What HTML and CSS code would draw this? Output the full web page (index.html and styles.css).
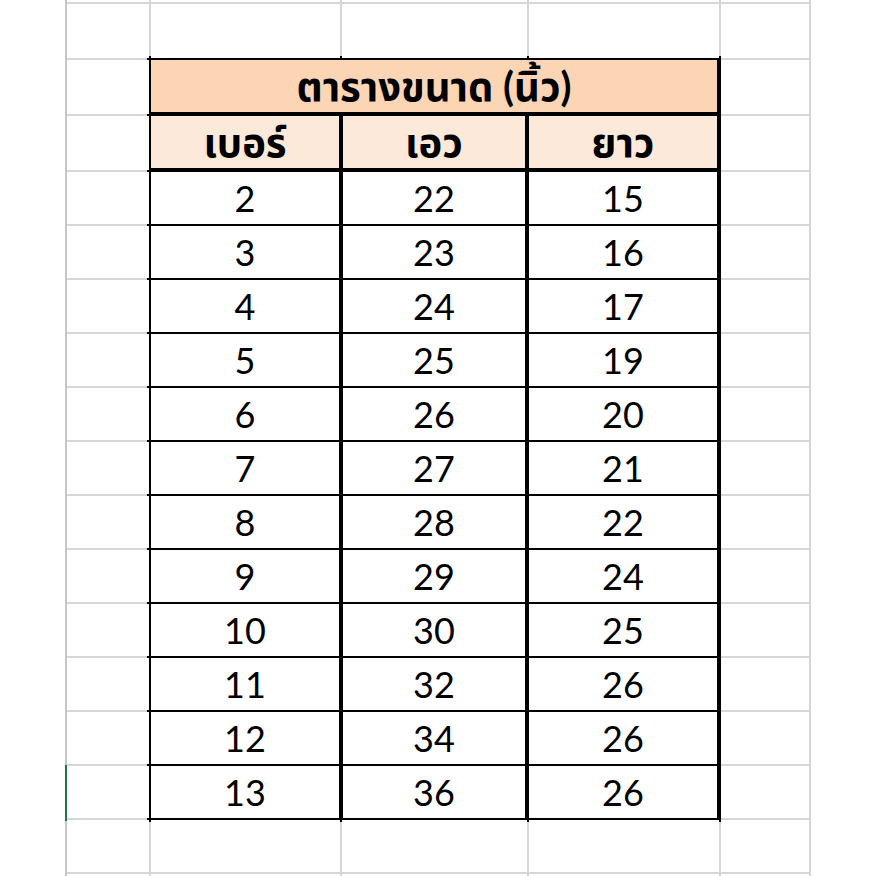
FILE: index.html
```html
<!DOCTYPE html>
<html lang="th">
<head>
<meta charset="utf-8">
<title>ตารางขนาด</title>
<link rel="stylesheet" href="styles.css">
</head>
<body>
<div class="page">
  <div class="gutter">
    <div class="gutter-line"><div class="sel-mark"></div></div>
  </div>
  <div class="sheet">
    <div class="size-table">
      <div class="cell title">ตารางขนาด (นิ้ว)</div>
      <div class="cell head">เบอร์</div>
      <div class="cell head">เอว</div>
      <div class="cell head">ยาว</div>
      <div class="cell">2</div><div class="cell">22</div><div class="cell">15</div>
      <div class="cell">3</div><div class="cell">23</div><div class="cell">16</div>
      <div class="cell">4</div><div class="cell">24</div><div class="cell">17</div>
      <div class="cell">5</div><div class="cell">25</div><div class="cell">19</div>
      <div class="cell">6</div><div class="cell">26</div><div class="cell">20</div>
      <div class="cell">7</div><div class="cell">27</div><div class="cell">21</div>
      <div class="cell">8</div><div class="cell">28</div><div class="cell">22</div>
      <div class="cell">9</div><div class="cell">29</div><div class="cell">24</div>
      <div class="cell">10</div><div class="cell">30</div><div class="cell">25</div>
      <div class="cell">11</div><div class="cell">32</div><div class="cell">26</div>
      <div class="cell">12</div><div class="cell">34</div><div class="cell">26</div>
      <div class="cell">13</div><div class="cell">36</div><div class="cell">26</div>
    </div>
    <div class="gc"></div><div class="gc"></div><div class="gc"></div><div class="gc"></div><div class="gc"></div>
    <div class="gc"></div><div class="gc"></div><div class="gc"></div><div class="gc"></div><div class="gc"></div>
    <div class="gc"></div><div class="gc"></div><div class="gc"></div><div class="gc"></div><div class="gc"></div>
    <div class="gc"></div><div class="gc"></div><div class="gc"></div><div class="gc"></div><div class="gc"></div>
    <div class="gc"></div><div class="gc"></div><div class="gc"></div><div class="gc"></div><div class="gc"></div>
    <div class="gc"></div><div class="gc"></div><div class="gc"></div><div class="gc"></div><div class="gc"></div>
    <div class="gc"></div><div class="gc"></div><div class="gc"></div><div class="gc"></div><div class="gc"></div>
    <div class="gc"></div><div class="gc"></div><div class="gc"></div><div class="gc"></div><div class="gc"></div>
    <div class="gc"></div><div class="gc"></div><div class="gc"></div><div class="gc"></div><div class="gc"></div>
    <div class="gc"></div><div class="gc"></div><div class="gc"></div>
  </div>
</div>
</body>
</html>
```

FILE: styles.css
```css
html, body {
  margin: 0;
  padding: 0;
  background: #ffffff;
}

.page {
  display: flex;
  width: 876px;
  height: 876px;
  overflow: hidden;
}

.gutter {
  width: 65px;
  display: flex;
  justify-content: flex-end;
  flex: none;
}

.gutter-line {
  width: 2px;
  height: 876px;
  margin-right: -2px;
  background: #c6c6c6;
  display: flex;
  flex-direction: column;
}

.sel-mark {
  margin-top: 765px;
  height: 56px;
  width: 2px;
  background: #217346;
}

.sheet {
  margin-left: 2px;
  display: grid;
  grid-template-columns: 82px 189px 185px 190px 88px;
  grid-template-rows: 2px 54px 54px 54px repeat(12, 52px) 52px 1fr;
  column-gap: 2px;
  row-gap: 2px;
  padding-right: 2px;
  height: 876px;
  background: #d6d6d6;
  align-self: flex-start;
}

.gc {
  background: #ffffff;
}

.size-table {
  grid-column: 2 / 5;
  grid-row: 3 / 17;
  margin: -4px -2px -4px -4px;
  padding: 4px;
  background: #000000;
  display: grid;
  grid-template-columns: 188px 182px 188px;
  grid-template-rows: 54px 54px repeat(12, 52px);
  column-gap: 4px;
  row-gap: 2px;
}

.cell {
  background: #ffffff;
  display: flex;
  align-items: center;
  justify-content: center;
  font-family: Lato, "Noto Sans Thai", "Noto Sans", sans-serif;
  font-size: 36px;
  color: #000000;
  line-height: 1;
}

.title {
  grid-column: 1 / -1;
  background: #fcd5b4;
  margin-bottom: 2px;
  font-weight: bold;
  font-size: 40px;
}

.head {
  background: #fde9d9;
  margin-bottom: 2px;
  font-weight: bold;
  font-size: 40px;
}
```
